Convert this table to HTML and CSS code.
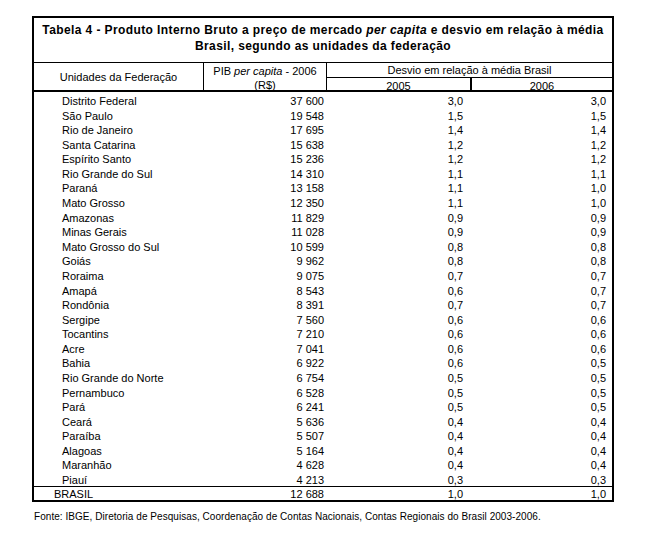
FILE: index.html
```html
<!DOCTYPE html>
<html lang="pt-BR">
<head>
<meta charset="utf-8">
<title>Tabela 4</title>
<link rel="stylesheet" href="styles.css">
</head>
<body>
<div class="sheet">
  <div class="title">Tabela 4 - Produto Interno Bruto a preço de mercado <i>per capita</i> e desvio em relação à média<br>Brasil, segundo as unidades da federação</div>
  <div class="head">
    <div class="h-uf">Unidades da Federação</div>
    <div class="h-pib">PIB <i>per capita</i> - 2006<br>(R$)</div>
    <div class="h-desvio">Desvio em relação à média Brasil</div>
    <div class="h-y05">2005</div>
    <div class="h-y06">2006</div>
  </div>
  <div class="body">
    <div class="row"><span class="uf">Distrito Federal</span><span class="pib">37 600</span><span class="d05">3,0</span><span class="d06">3,0</span></div>
    <div class="row"><span class="uf">São Paulo</span><span class="pib">19 548</span><span class="d05">1,5</span><span class="d06">1,5</span></div>
    <div class="row"><span class="uf">Rio de Janeiro</span><span class="pib">17 695</span><span class="d05">1,4</span><span class="d06">1,4</span></div>
    <div class="row"><span class="uf">Santa Catarina</span><span class="pib">15 638</span><span class="d05">1,2</span><span class="d06">1,2</span></div>
    <div class="row"><span class="uf">Espírito Santo</span><span class="pib">15 236</span><span class="d05">1,2</span><span class="d06">1,2</span></div>
    <div class="row"><span class="uf">Rio Grande do Sul</span><span class="pib">14 310</span><span class="d05">1,1</span><span class="d06">1,1</span></div>
    <div class="row"><span class="uf">Paraná</span><span class="pib">13 158</span><span class="d05">1,1</span><span class="d06">1,0</span></div>
    <div class="row"><span class="uf">Mato Grosso</span><span class="pib">12 350</span><span class="d05">1,1</span><span class="d06">1,0</span></div>
    <div class="row"><span class="uf">Amazonas</span><span class="pib">11 829</span><span class="d05">0,9</span><span class="d06">0,9</span></div>
    <div class="row"><span class="uf">Minas Gerais</span><span class="pib">11 028</span><span class="d05">0,9</span><span class="d06">0,9</span></div>
    <div class="row"><span class="uf">Mato Grosso do Sul</span><span class="pib">10 599</span><span class="d05">0,8</span><span class="d06">0,8</span></div>
    <div class="row"><span class="uf">Goiás</span><span class="pib">9 962</span><span class="d05">0,8</span><span class="d06">0,8</span></div>
    <div class="row"><span class="uf">Roraima</span><span class="pib">9 075</span><span class="d05">0,7</span><span class="d06">0,7</span></div>
    <div class="row"><span class="uf">Amapá</span><span class="pib">8 543</span><span class="d05">0,6</span><span class="d06">0,7</span></div>
    <div class="row"><span class="uf">Rondônia</span><span class="pib">8 391</span><span class="d05">0,7</span><span class="d06">0,7</span></div>
    <div class="row"><span class="uf">Sergipe</span><span class="pib">7 560</span><span class="d05">0,6</span><span class="d06">0,6</span></div>
    <div class="row"><span class="uf">Tocantins</span><span class="pib">7 210</span><span class="d05">0,6</span><span class="d06">0,6</span></div>
    <div class="row"><span class="uf">Acre</span><span class="pib">7 041</span><span class="d05">0,6</span><span class="d06">0,6</span></div>
    <div class="row"><span class="uf">Bahia</span><span class="pib">6 922</span><span class="d05">0,6</span><span class="d06">0,5</span></div>
    <div class="row"><span class="uf">Rio Grande do Norte</span><span class="pib">6 754</span><span class="d05">0,5</span><span class="d06">0,5</span></div>
    <div class="row"><span class="uf">Pernambuco</span><span class="pib">6 528</span><span class="d05">0,5</span><span class="d06">0,5</span></div>
    <div class="row"><span class="uf">Pará</span><span class="pib">6 241</span><span class="d05">0,5</span><span class="d06">0,5</span></div>
    <div class="row"><span class="uf">Ceará</span><span class="pib">5 636</span><span class="d05">0,4</span><span class="d06">0,4</span></div>
    <div class="row"><span class="uf">Paraíba</span><span class="pib">5 507</span><span class="d05">0,4</span><span class="d06">0,4</span></div>
    <div class="row"><span class="uf">Alagoas</span><span class="pib">5 164</span><span class="d05">0,4</span><span class="d06">0,4</span></div>
    <div class="row"><span class="uf">Maranhão</span><span class="pib">4 628</span><span class="d05">0,4</span><span class="d06">0,4</span></div>
    <div class="row"><span class="uf">Piauí</span><span class="pib">4 213</span><span class="d05">0,3</span><span class="d06">0,3</span></div>
  </div>
  <div class="row total"><span class="uf">BRASIL</span><span class="pib">12 688</span><span class="d05">1,0</span><span class="d06">1,0</span></div>
</div>
<p class="source">Fonte: IBGE, Diretoria de Pesquisas, Coordenação de Contas Nacionais, Contas Regionais do Brasil 2003-2006.</p>
</body>
</html>
```

FILE: styles.css
```css
* { box-sizing: border-box; }

html, body {
  margin: 0;
  padding: 0;
  background: #ffffff;
  color: #000000;
  font-family: "Liberation Sans", Arial, sans-serif;
}

body {
  padding: 16px 0 0 32px;
}

.sheet {
  width: 582px;
  border: 2px solid #000;
  font-size: 11px;
}

.title {
  height: 45px;
  padding-top: 4px;
  border-bottom: 1px solid #000;
  text-align: center;
  font-weight: bold;
  font-size: 12px;
  line-height: 16px;
  letter-spacing: 0.4px;
}

.head {
  display: grid;
  grid-template-columns: 170px 123px 145px 140px;
  grid-template-rows: 15px 12px;
  border-bottom: 2px solid #000;
  line-height: 12px;
}

.h-uf {
  grid-row: 1 / 3;
  grid-column: 1;
  border-right: 1px solid #000;
  display: flex;
  align-items: center;
  justify-content: center;
  padding-top: 1px;
}

.h-pib {
  grid-row: 1 / 3;
  grid-column: 2;
  border-right: 1px solid #000;
  text-align: center;
  padding-top: 1px;
  line-height: 14px;
}

.h-desvio {
  grid-row: 1;
  grid-column: 3 / 5;
  border-bottom: 1px solid #000;
  padding-top: 1px;
  text-align: center;
}

.h-y05 {
  grid-row: 2;
  grid-column: 3;
  border-right: 2px solid #000;
  padding-top: 2px;
  text-align: center;
}

.h-y06 {
  grid-row: 2;
  grid-column: 4;
  padding-top: 2px;
  text-align: center;
}

.row {
  display: grid;
  grid-template-columns: 170px 123px 145px 140px;
  height: 14.58px;
  line-height: 14px;
  padding-top: 2px;
}

.uf { padding-left: 28px; }
.pib { text-align: right; padding-right: 3px; }
.d05 { text-align: right; padding-right: 9px; }
.d06 { text-align: right; padding-right: 6px; }

.total {
  height: 14px;
  border-top: 1px solid #000;
  line-height: 12px;
  padding-top: 1px;
}

.total .uf { padding-left: 20px; }

.source {
  margin: 9px 0 0 2px;
  font-size: 10px;
  line-height: 12px;
  letter-spacing: 0.05px;
}
```
